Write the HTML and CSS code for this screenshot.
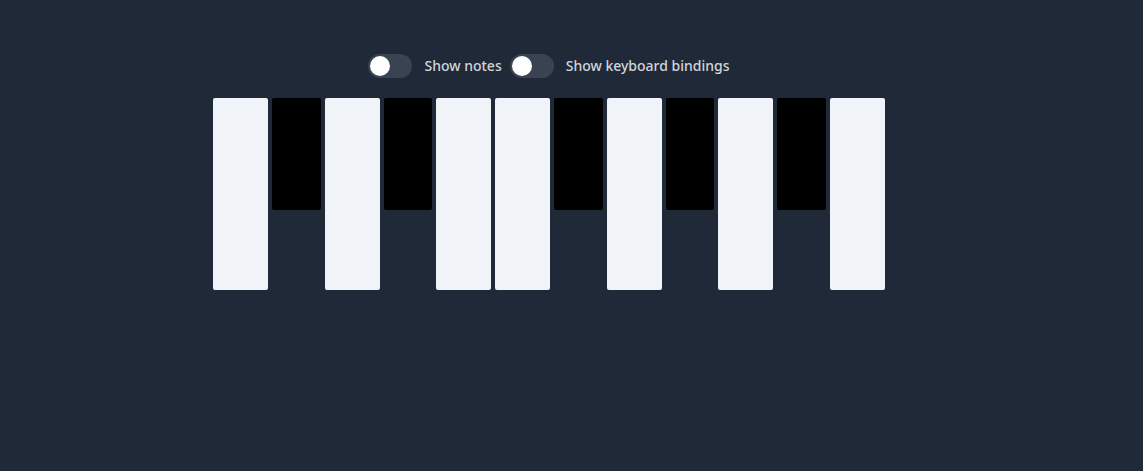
FILE: index.html
```
<!DOCTYPE html>
<html lang="en">
<head>
<meta charset="utf-8">
<meta name="viewport" content="width=device-width, initial-scale=1">
<title>Piano</title>
<link rel="stylesheet" href="styles.css">
</head>
<body>
<main class="app">
  <div class="options">
    <label class="option"><input class="switch" type="checkbox" role="switch">Show notes</label>
    <label class="option"><input class="switch" type="checkbox" role="switch">Show keyboard bindings</label>
  </div>
  <div class="piano">
    <button class="key white" type="button" aria-label="C"></button>
    <button class="key black" type="button" aria-label="C sharp"></button>
    <button class="key white" type="button" aria-label="D"></button>
    <button class="key black" type="button" aria-label="D sharp"></button>
    <button class="key white" type="button" aria-label="E"></button>
    <button class="key white" type="button" aria-label="F"></button>
    <button class="key black" type="button" aria-label="F sharp"></button>
    <button class="key white" type="button" aria-label="G"></button>
    <button class="key black" type="button" aria-label="G sharp"></button>
    <button class="key white" type="button" aria-label="A"></button>
    <button class="key black" type="button" aria-label="A sharp"></button>
    <button class="key white" type="button" aria-label="B"></button>
  </div>
</main>
</body>
</html>
```
FILE: styles.css
```
* {
  box-sizing: border-box;
}

body {
  margin: 0;
  background: #202937;
  font-family: "Noto Sans", "Open Sans", sans-serif;
}

.app {
  display: flex;
  flex-direction: column;
  align-items: center;
  gap: 20px;
  padding: 54px 45px 48px 0;
}

.options {
  display: flex;
  flex-wrap: wrap;
  justify-content: center;
  gap: 8px;
}

.option {
  display: flex;
  align-items: center;
  gap: 12px;
  color: #d1d5db;
  font-size: 14px;
  font-weight: 500;
  line-height: 24px;
  cursor: pointer;
}

.switch {
  appearance: none;
  flex: none;
  width: 44px;
  height: 24px;
  margin: 0;
  padding: 2px;
  border-radius: 12px;
  background: #3a4351;
  cursor: pointer;
}

.switch::before {
  content: "";
  display: block;
  width: 20px;
  height: 20px;
  border-radius: 50%;
  background: #fff;
}

.switch:checked {
  background: #2563eb;
}

.switch:checked::before {
  margin-left: auto;
}

.piano {
  display: flex;
  align-items: flex-start;
  gap: 4px;
  width: 100%;
  max-width: 672px;
}

.key {
  min-width: 0;
  padding: 0;
  border: 0;
  border-radius: 2px;
  cursor: pointer;
}

.white {
  flex: 550 1 0;
  height: 192px;
  background: #f0f4f9;
}

.black {
  flex: 486 1 0;
  height: 112px;
  background: #000;
}
```
